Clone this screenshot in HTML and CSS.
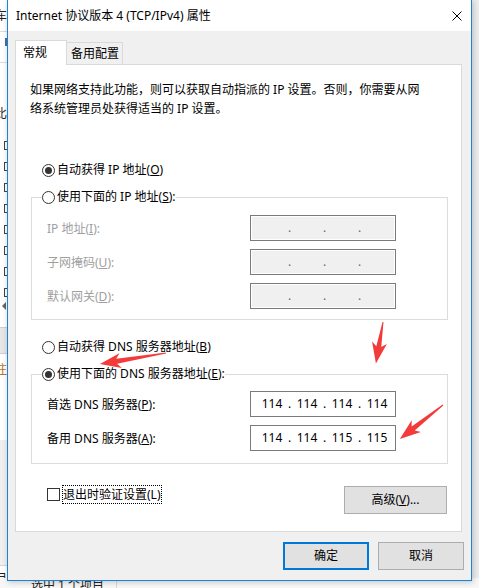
FILE: index.html
```html
<!DOCTYPE html>
<html lang="zh-CN">
<head>
<meta charset="utf-8">
<title>Internet 协议版本 4 (TCP/IPv4) 属性</title>
<link rel="stylesheet" href="styles.css">
</head>
<body>
<div class="desk">
  <div class="bg-left">
    <span class="bg-char ch-a">车</span>
    <span class="bg-line ln-a"></span>
    <span class="bg-mark"></span>
    <span class="bg-line ln-b"></span>
    <span class="bg-char ch-b">比</span>
    <div class="bg-checks">
      <span class="bg-check"></span><span class="bg-check"></span><span class="bg-check"></span><span class="bg-check"></span>
      <span class="bg-check"></span><span class="bg-check"></span><span class="bg-check"></span><span class="bg-check"></span>
    </div>
    <span class="bg-tri"></span>
    <span class="bg-band"></span>
    <span class="bg-char ch-c">注</span>
    <span class="bg-gray"></span>
    <span class="bg-char ch-d">目</span>
  </div>
  <div class="bg-right"></div>
  <div class="bg-status"><span>选中 1 个项目</span><i class="bg-sep"></i></div>
</div>

<div class="dialog">
  <div class="titlebar">
    <span class="title">Internet 协议版本 4 (TCP/IPv4) 属性</span>
    <svg class="close" viewBox="0 0 10 10" width="10" height="10"><path d="M0.5 0.5 L9.5 9.5 M9.5 0.5 L0.5 9.5"/></svg>
  </div>
  <div class="dbody">
    <div class="tabs">
      <div class="tab active">常规</div>
      <div class="tab">备用配置</div>
    </div>
    <div class="panel">
      <p class="desc">如果网络支持此功能，则可以获取自动指派的 IP 设置。否则，你需要从网<br>络系统管理员处获得适当的 IP 设置。</p>

      <label class="radio r-first"><span class="dot checked"></span>自动获得 IP 地址(<u>O</u>)</label>
      <fieldset class="group g-ip">
        <legend><label class="radio in-legend"><span class="dot"></span>使用下面的 IP 地址(<u>S</u>):</label></legend>
        <div class="row off"><span>IP 地址(<u>I</u>):</span>
          <div class="ipbox disabled"><span class="oct"></span><span class="sep">.</span><span class="oct"></span><span class="sep">.</span><span class="oct"></span><span class="sep">.</span><span class="oct"></span></div></div>
        <div class="row off"><span>子网掩码(<u>U</u>):</span>
          <div class="ipbox disabled"><span class="oct"></span><span class="sep">.</span><span class="oct"></span><span class="sep">.</span><span class="oct"></span><span class="sep">.</span><span class="oct"></span></div></div>
        <div class="row off"><span>默认网关(<u>D</u>):</span>
          <div class="ipbox disabled"><span class="oct"></span><span class="sep">.</span><span class="oct"></span><span class="sep">.</span><span class="oct"></span><span class="sep">.</span><span class="oct"></span></div></div>
      </fieldset>

      <label class="radio r-dns"><span class="dot"></span>自动获得 DNS 服务器地址(<u>B</u>)</label>
      <fieldset class="group g-dns">
        <legend><label class="radio in-legend"><span class="dot checked"></span>使用下面的 DNS 服务器地址(<u>E</u>):</label></legend>
        <div class="row"><span>首选 DNS 服务器(<u>P</u>):</span>
          <div class="ipbox"><span class="oct">114</span><span class="sep">.</span><span class="oct">114</span><span class="sep">.</span><span class="oct">114</span><span class="sep">.</span><span class="oct">114</span></div></div>
        <div class="row"><span>备用 DNS 服务器(<u>A</u>):</span>
          <div class="ipbox"><span class="oct">114</span><span class="sep">.</span><span class="oct">114</span><span class="sep">.</span><span class="oct">115</span><span class="sep">.</span><span class="oct">115</span></div></div>
      </fieldset>

      <div class="foot">
        <label class="check"><span class="box"></span><span class="focus">退出时验证设置(L)</span></label>
        <button class="btn adv" type="button">高级(<u>V</u>)...</button>
      </div>
    </div>
    <div class="actions">
      <button class="btn primary" type="button">确定</button>
      <button class="btn" type="button">取消</button>
    </div>
  </div>
</div>

<svg class="marks" width="479" height="588" viewBox="0 0 479 588">
  <polygon transform="translate(166 353) rotate(170.5)" points="0,-0.5 50,-2.5 46,-7.5 67,0 46,7.5 50,2.5 0,0.5"/>
  <polygon transform="translate(383 322) rotate(99.7)" points="0,-0.5 25,-2.5 21,-7.5 42,0 21,7.5 25,2.5 0,0.5"/>
  <polygon transform="translate(443 405) rotate(141.7)" points="0,-0.5 38,-2.5 34,-7.5 55,0 34,7.5 38,2.5 0,0.5"/>
</svg>
</body>
</html>
```

FILE: styles.css
```css
* { box-sizing: border-box; }
html, body { margin: 0; padding: 0; }
body {
  width: 479px;
  height: 588px;
  overflow: hidden;
  position: relative;
  background: #fff;
  font-family: "Noto Sans", "Noto Sans CJK SC", sans-serif;
  font-size: 12px;
  color: #000;
}

/* ---------- background window (behind the dialog) ---------- */
.desk { position: absolute; inset: 0; background: #fff; }
.bg-left { position: absolute; left: 0; top: 0; width: 7px; height: 588px; overflow: hidden; background: #fff; }
.bg-char { position: absolute; left: -5px; font-size: 12px; line-height: 14px; color: #222; }
.ch-a { top: 9px; }
.ch-b { top: 107px; }
.ch-c { top: 363px; color: #c07020; }
.ch-d { top: 572px; }
.bg-line { position: absolute; left: 0; width: 7px; height: 1px; background: #dcdcdc; }
.ln-a { top: 31px; }
.ln-b { top: 62px; }
.bg-mark { position: absolute; left: 5px; top: 38px; width: 2px; height: 8px; background: #4a6fa0; }
.bg-checks { position: absolute; left: 4px; top: 141px; display: flex; flex-direction: column; gap: 12px; }
.bg-check { width: 9px; height: 9px; border: 1px solid #444; background: #fff; }
.bg-tri {
  position: absolute; left: 2px; top: 302px; width: 0; height: 0;
  border-top: 4px solid transparent; border-bottom: 4px solid transparent; border-right: 4px solid #666;
}
.bg-band { position: absolute; left: 0; top: 327px; width: 7px; height: 27px; background: #e6e6e6; border-top: 1px solid #cfcfcf; border-bottom: 1px solid #cfcfcf; }
.bg-gray { position: absolute; left: 0; top: 440px; width: 7px; height: 126px; background: #f0f0f0; border-bottom: 1px solid #d6d6d6; }
.bg-right { position: absolute; left: 472px; top: 0; width: 7px; height: 588px; background: #ececec; }
.bg-status {
  position: absolute; left: 0; top: 578px; width: 479px; height: 10px;
  background: #f7f7f7; display: flex; align-items: flex-start;
  padding-left: 31px; line-height: 14px; color: #222;
}
.bg-sep { display: block; margin-left: 12px; width: 1px; height: 10px; background: #d9d9d9; }

/* ---------- dialog ---------- */
.dialog {
  position: absolute; left: 7px; top: 0;
  width: 465px; height: 581px;
  background: #f0f0f0;
  border: 1px solid #1883d7;
  border-top: none;
  box-shadow: 1px 1px 6px rgba(0, 0, 0, 0.22);
  display: flex; flex-direction: column;
}
.titlebar {
  height: 31px; flex: none; background: #fff;
  display: flex; align-items: center; justify-content: space-between;
  padding: 0 9px 0 8px;
}
.title { line-height: 16px; }
.close { display: block; fill: none; stroke: #000; stroke-width: 1; }

.dbody { padding: 9px 9px 0 7px; }

.tabs { display: flex; align-items: flex-end; height: 24px; }
.tab {
  height: 22px; width: 57px; margin-left: -1px;
  border: 1px solid #d9d9d9; border-bottom: none;
  background: #f0f0f0;
  padding-left: 4px; line-height: 21px; white-space: nowrap;
}
.tab.active {
  position: relative; z-index: 1;
  width: 52px; height: 25px; margin-left: 0; margin-bottom: -1px;
  background: #fff; padding-left: 7px; line-height: 23px;
}

.panel {
  height: 468px;
  background: #fff;
  border: 1px solid #d9d9d9;
  padding: 15px 13px 0 14px;
}
.desc { margin: 0; line-height: 19px; white-space: nowrap; }

.radio {
  display: flex; align-items: center;
  height: 16px; line-height: 16px; margin-left: 12px; white-space: nowrap;
}
.radio.in-legend { margin-left: 0; background: #fff; }
.r-first { margin-top: 44px; }
.r-dns { margin-top: 19px; }
.dot {
  position: relative; flex: none;
  width: 13px; height: 13px; margin-right: 2px;
  border: 1px solid #333; border-radius: 50%; background: #fff;
}
.dot.checked::after {
  content: ""; position: absolute; left: 2px; top: 2px;
  width: 7px; height: 7px; border-radius: 50%; background: #333;
}

.group {
  margin: 11px 0 0 1px;
  min-width: 0;
  border: 1px solid #dcdcdc;
  padding: 10px 51px 10px 15px;
}
.group legend { padding: 0; margin-left: -5px; height: 16px; }
.g-dns { padding-top: 9px; padding-bottom: 12px; }

.row { display: flex; align-items: center; justify-content: space-between; height: 26px; white-space: nowrap; }
.row + .row { margin-top: 8px; }
.row.off { color: #a0a0a0; }

.ipbox {
  width: 146px; height: 26px;
  border: 1px solid #7a7a7a; background: #fff;
  display: flex; align-items: center; padding-left: 7px;
  color: #000; line-height: 16px;
}
.ipbox.disabled { background: #f0f0f0; box-shadow: inset 0 0 0 1px #fff; color: #6a6a6a; }
.oct { width: 28px; text-align: center; }
.sep { width: 7px; text-align: center; }

.foot {
  margin-top: 21px;
  display: flex; justify-content: space-between; align-items: flex-start;
  padding: 0 1px 0 17px;
}
.check { display: flex; align-items: flex-start; }
.box { width: 13px; height: 13px; margin: 3px 2px 0 0; border: 1px solid #333; background: #fff; }
.focus { height: 19px; line-height: 17px; border: 1px dotted #000; white-space: nowrap; }

.btn {
  font-family: inherit; font-size: 12px; color: #000;
  background: #e1e1e1; border: 1px solid #adadad;
  height: 28px; padding: 0; line-height: 16px;
}
.btn.adv { width: 103px; margin-top: 1px; }
.actions { display: flex; justify-content: flex-end; gap: 9px; margin: 10px -2px 0 0; }
.actions .btn { width: 86px; }
.btn.primary { border: 2px solid #0078d7; }

/* ---------- annotation arrows ---------- */
.marks { position: absolute; left: 0; top: 0; pointer-events: none; z-index: 10; }
.marks polygon { fill: #f33b3b; }
```
